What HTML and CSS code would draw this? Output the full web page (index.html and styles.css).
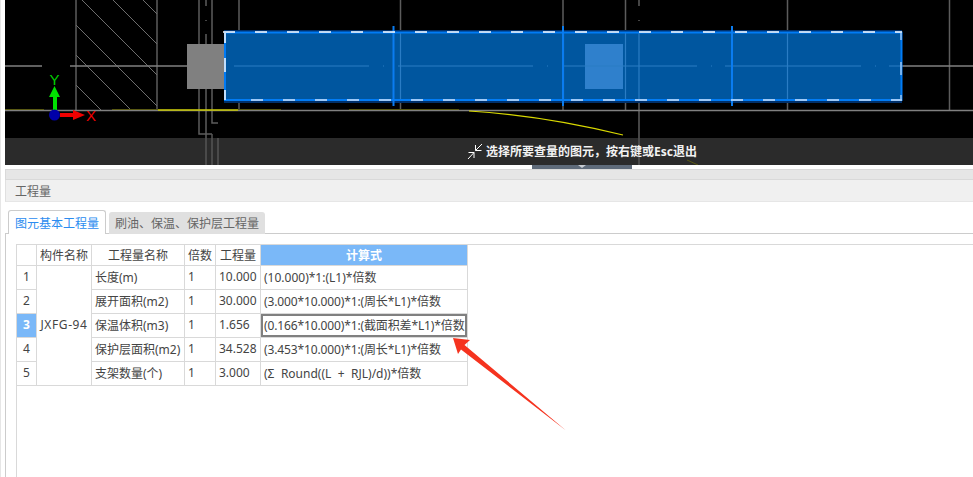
FILE: index.html
```html
<!DOCTYPE html>
<html lang="zh-CN">
  <head>
    <meta charset="UTF-8" />
    <title>工程量</title>
    <link rel="stylesheet" href="styles.css">
  </head>
  <body>
    <div class="page">
      <div class="viewport">
        <svg class="cad" width="968" height="165" viewBox="5 0 968 165">
          <!-- wall and pipe lines -->
          <g class="line-dim">
            <path d="M76 0V110M157 0V110M199 0V134H212M212 0V123H218M239 0V110M400.5 0V32M400.5 100V110M563 0V32M563 100V110M625.5 0V32M625.5 100V110M787.5 0V32M787.5 100V110M949.5 0V110" />
            <path d="M206 0V6M206 34V138M639 0V6M639 34V138M206 20V21M639 20V21" />
          </g>
          <g class="hatch">
            <path d="M82 0L157 75M113 0L157 44M143 0L157 14M76 25L157 106M76 55L131 110M76 85L101 110" />
          </g>
          <g class="line-mid">
            <path d="M5 66H42M70 66H187M901 66H973M5 110.500H973" />
          </g>
          <path class="olive" d="M5 109.500H44M112 109.500H158M238 109.500H281M349 109.500H459" />
          <path class="yellow-flat" d="M158 110H238" />
          <path class="yellow" d="M469 111C520 114 570 122 623 135" />
          <!-- selected element -->
          <rect class="post" x="187" y="44" width="37" height="45" />
          <rect class="glow" x="224" y="30" width="678" height="73" />
          <rect class="fill" x="224" y="32" width="678" height="68" />
          <rect class="post-lit" x="585" y="44" width="38" height="45" />
          <path class="centre" d="M234 66H369M383 66H384M398 66H533M547 66H548M562 66H697M711 66H712M725 66H861M875 66H876M889 66H901" />
          <path class="centre" d="M400.500 32V100M563.500 32V100M625.500 32V100M639 32V100M787.500 32V100" />
          <path class="edge" d="M224 32.500H901.500V100H225V32.500" />
          <path class="ticks" d="M393.500 26V106M563 26V106M732 26V106" />
          <path class="dash-top" d="M223 32H902" />
          <path class="dash-bottom" d="M251 100H902" />
          <path class="dash-side" d="M225 33V43M225 58V72M225 90V100" />
          <path class="dash-right" d="M901 33V40M901 62V75M901 95V100" />
          <!-- prompt bar, lines show through it -->
          <rect class="bar" x="5" y="138" width="968" height="27" />
          <path class="line-bar" d="M206 138V165M212 134V165M218 138V165M639 138V165" />
          <path class="olive" d="M687 160L698 165" />
          <!-- axes -->
          <path class="axis-y" d="M53 110V97H49L54.500 86L60 97H57V110Z" />
          <path class="axis-x" d="M60 113H73V110L85 115L73 120V117H60Z" />
          <circle class="axis-o" cx="54.500" cy="115" r="5.500" />
          <text class="label-y" x="49.500" y="85">Y</text>
          <text class="label-x" x="86" y="121">X</text>
        </svg>
        <div class="tip">
          <svg class="tip-icon" width="16" height="17" viewBox="0 0 16 17">
            <path d="M15 1L8.500 7.500M8.500 2V7.500H14.500M1 16L7 9.500M1.500 9.500H7V15" />
          </svg>
          <span>选择所要查量的图元，按右键或Esc退出</span>
        </div>
      </div>
      <div class="grip-row">
        <div class="grip"><i></i></div>
      </div>
      <div class="panel-strip"></div>
      <div class="panel-title">工程量</div>
      <div class="tabs">
        <a class="tab tab-on">图元基本工程量</a>
        <a class="tab">刷油、保温、保护层工程量</a>
      </div>
      <div class="tab-body">
        <div class="sheet">
          <table>
            <colgroup>
              <col class="c-no"><col class="c-part"><col class="c-name"><col class="c-times"><col class="c-qty"><col class="c-calc">
            </colgroup>
            <thead>
              <tr>
                <th></th>
                <th>构件名称</th>
                <th>工程量名称</th>
                <th>倍数</th>
                <th>工程量</th>
                <th class="on">计算式</th>
              </tr>
            </thead>
            <tbody>
              <tr>
                <td class="no">1</td>
                <td class="part" rowspan="5">JXFG-94</td>
                <td>长度(m)</td>
                <td>1</td>
                <td>10.000</td>
                <td>(10.000)*1:(L1)*倍数</td>
              </tr>
              <tr>
                <td class="no">2</td>
                <td>展开面积(m2)</td>
                <td>1</td>
                <td>30.000</td>
                <td class="calc">(3.000*10.000)*1:(周长*L1)*倍数</td>
              </tr>
              <tr>
                <td class="no on">3</td>
                <td>保温体积(m3)</td>
                <td>1</td>
                <td>1.656</td>
                <td class="calc picked">(0.166*10.000)*1:(截面积差*L1)*倍数</td>
              </tr>
              <tr>
                <td class="no">4</td>
                <td>保护层面积(m2)</td>
                <td>1</td>
                <td>34.528</td>
                <td class="calc">(3.453*10.000)*1:(周长*L1)*倍数</td>
              </tr>
              <tr>
                <td class="no">5</td>
                <td>支架数量(个)</td>
                <td>1</td>
                <td>3.000</td>
                <td class="calc-sum">(Σ Round((L + RJL)/d))*倍数</td>
              </tr>
            </tbody>
          </table>
        </div>
      </div>
      <svg class="arrow" width="114" height="94" viewBox="453 337 114 94">
        <path d="M453 338L470 340L464.500 345L566 430.500L461 349.500L458 354Z" />
      </svg>
    </div>
  </body>
</html>
```

FILE: styles.css
```css
* {
  margin: 0;
  padding: 0;
  box-sizing: border-box;
}

body {
  font-family: "Noto Sans", "Noto Sans CJK SC", sans-serif;
  font-size: 12px;
  color: #444;
  background-color: #fff;
}

.page {
  position: relative;
  display: flex;
  flex-direction: column;
  width: 973px;
  height: 477px;
  border-left: 1px solid #e6e6e6;
  overflow: hidden;
}

/* cad view */
.viewport {
  position: relative;
  flex: none;
  margin-left: 4px;
  height: 165px;
  background-color: #000;
}

.cad {
  display: block;
  fill: none;
}

.line-dim {
  stroke: #5c5c5c;
  stroke-width: 1.5;
}

.hatch {
  stroke: #6e6e6e;
}

.line-mid {
  stroke: #808080;
  stroke-width: 1.5;
}

.olive {
  stroke: #5a5a14;
  stroke-width: 1;
}

.yellow-flat {
  stroke: #c8c800;
  stroke-width: 1.5;
}

.yellow {
  stroke: #d8d800;
  stroke-width: 1.2;
}

.post {
  fill: #808080;
}

.glow {
  fill: #00306a;
}

.fill {
  fill: #00569f;
}

.post-lit {
  fill: #2f80cc;
}

.centre {
  stroke: #2a7cc4;
  stroke-width: 1.2;
}

.edge {
  stroke: #007bf5;
  stroke-width: 2;
}

.ticks {
  stroke: #0a7cf0;
  stroke-width: 2;
}

.dash-top {
  stroke: #fff;
  stroke-width: 1.5;
  stroke-dasharray: 12 20;
}

.dash-bottom {
  stroke: #d4e4f7;
  stroke-width: 1.5;
  stroke-dasharray: 12 20;
}

.dash-side {
  stroke: #fff;
  stroke-width: 1.5;
}

.dash-right {
  stroke: #9cc8f5;
  stroke-width: 1.5;
}

.bar {
  fill: #2b2b2b;
}

.line-bar {
  stroke: #565656;
  stroke-width: 1.5;
}

.axis-y {
  fill: #00e000;
}

.axis-x {
  fill: #f00000;
}

.axis-o {
  fill: #0000a8;
}

.label-x,
.label-y {
  font-family: "Liberation Sans", sans-serif;
  font-size: 15px;
}

.label-x {
  fill: #f00000;
}

.label-y {
  fill: #00d000;
}

.tip {
  position: absolute;
  left: 0;
  bottom: 0;
  display: flex;
  align-items: center;
  gap: 3px;
  padding-left: 462px;
  padding-bottom: 1px;
  width: 100%;
  height: 27px;
  font-weight: 700;
  color: #f2f2f2;
}

.tip-icon {
  fill: none;
  stroke: #fff;
  stroke-width: 1;
}

/* splitter grip */
.grip-row {
  flex: none;
  height: 4px;
}

.grip {
  display: flex;
  justify-content: center;
  margin-left: 531px;
  width: 100px;
  height: 4px;
  background-color: #5f6b7a;
}

.grip i {
  display: block;
  width: 0;
  height: 0;
  border-top: 3px solid #c8ccd2;
  border-left: 4px solid transparent;
  border-right: 4px solid transparent;
}

/* panel */
.panel-strip {
  flex: none;
  margin-left: 4px;
  height: 11px;
  border-top: 1px solid #d9d9d9;
  border-left: 1px solid #d9d9d9;
  border-bottom: 1px solid #d9d9d9;
  background-color: #e6e6e6;
}

.panel-title {
  flex: none;
  display: flex;
  align-items: center;
  margin-left: 4px;
  padding-left: 9px;
  height: 22px;
  border-left: 1px solid #e0e0e0;
  border-bottom: 1px solid #e6e6e6;
  color: #666;
  background-color: #f0f0f0;
}

.tabs {
  flex: none;
  display: flex;
  align-items: flex-end;
  gap: 3px;
  position: relative;
  z-index: 1;
  margin-top: 8px;
  margin-left: 7px;
  height: 24px;
}

.tab {
  display: flex;
  align-items: center;
  justify-content: center;
  height: 22px;
  padding: 0 6px;
  border-radius: 3px 3px 0 0;
  color: #666;
  background-color: #e0e0e0;
}

.tab-on {
  height: 24px;
  padding: 0 6px;
  border: 1px solid #ccc;
  border-bottom: 0;
  color: #2b8cf0;
  background-color: #fff;
}

.tab-body {
  flex: 1;
  margin-left: 4px;
  margin-top: -1px;
  padding: 10px 0 0 10px;
  border-top: 1px solid #ccc;
  border-left: 1px solid #ccc;
}

.sheet {
  height: 100%;
  border-top: 1px solid #d9d9d9;
  border-left: 1px solid #d9d9d9;
}

table {
  table-layout: fixed;
  width: 451px;
  border-collapse: separate;
  border-spacing: 0;
}

.c-no { width: 20px; }
.c-part { width: 55px; }
.c-name { width: 93px; }
.c-times { width: 31px; }
.c-qty { width: 45px; }
.c-calc { width: 207px; }

th,
td {
  height: 24px;
  padding: 0 3px 2px;
  border-right: 1px solid #d9d9d9;
  border-bottom: 1px solid #d9d9d9;
  white-space: nowrap;
  overflow: hidden;
}

th {
  height: 21px;
  padding: 0 0 1px;
  font-weight: 400;
  text-align: center;
}

.no,
.part {
  padding: 0 0 2px;
  text-align: center;
}

.part {
  letter-spacing: 0.6px;
}

.calc {
  letter-spacing: -0.13px;
}

.calc-sum {
  word-spacing: 3.3px;
}

.on {
  font-weight: 700;
  color: #fff;
  background-color: #7ab8f8;
}

td.picked {
  box-shadow: inset 0 0 0 2px #808080;
}

.arrow {
  position: absolute;
  left: 452px;
  top: 337px;
  fill: #f5331f;
}
```
